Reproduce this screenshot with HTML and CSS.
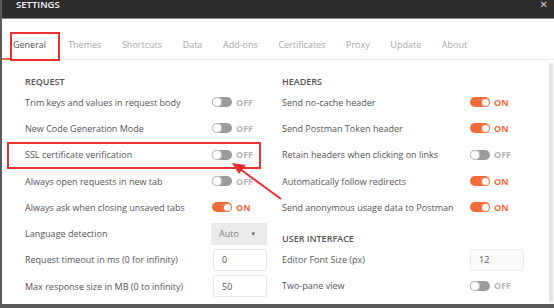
FILE: index.html
```html
<!DOCTYPE html>
<html>
<head>
    <title>Settings</title>
    <link rel="stylesheet" href="styles.css">
</head>
<body>
    <div class="window">
        <div class="titlebar">
            <span class="title">SETTINGS</span>
            <span class="close">&#x2715;</span>
        </div>
        <div class="tabs">
            <span class="tab active">General</span>
            <span class="tab">Themes</span>
            <span class="tab">Shortcuts</span>
            <span class="tab">Data</span>
            <span class="tab">Add-ons</span>
            <span class="tab">Certificates</span>
            <span class="tab">Proxy</span>
            <span class="tab">Update</span>
            <span class="tab">About</span>
        </div>
        <div class="body">
            <div class="columns">
                <div class="col col-left">
                    <div class="section">REQUEST</div>
                    <div class="row"><span class="label">Trim keys and values in request body</span><span class="toggle"><i></i></span><span class="state">OFF</span></div>
                    <div class="row"><span class="label">New Code Generation Mode</span><span class="toggle"><i></i></span><span class="state">OFF</span></div>
                    <div class="row"><span class="label">SSL certificate verification</span><span class="toggle"><i></i></span><span class="state">OFF</span></div>
                    <div class="row"><span class="label">Always open requests in new tab</span><span class="toggle"><i></i></span><span class="state">OFF</span></div>
                    <div class="row"><span class="label">Always ask when closing unsaved tabs</span><span class="toggle on"><i></i></span><span class="state on">ON</span></div>
                    <div class="row"><span class="label">Language detection</span><span class="select">Auto <b>&#9662;</b></span></div>
                    <div class="row"><span class="label">Request timeout in ms (0 for infinity)</span><span class="input">0</span></div>
                    <div class="row"><span class="label">Max response size in MB (0 to infinity)</span><span class="input">50</span></div>
                    <div class="row"><span class="label">Automatically persist variable values</span><span class="toggle"><i></i></span><span class="state">OFF</span></div>
                </div>
                <div class="col col-right">
                    <div class="section">HEADERS</div>
                    <div class="row"><span class="label">Send no-cache header</span><span class="toggle on"><i></i></span><span class="state on">ON</span></div>
                    <div class="row"><span class="label">Send Postman Token header</span><span class="toggle on"><i></i></span><span class="state on">ON</span></div>
                    <div class="row"><span class="label">Retain headers when clicking on links</span><span class="toggle"><i></i></span><span class="state">OFF</span></div>
                    <div class="row"><span class="label">Automatically follow redirects</span><span class="toggle on"><i></i></span><span class="state on">ON</span></div>
                    <div class="row"><span class="label">Send anonymous usage data to Postman</span><span class="toggle on"><i></i></span><span class="state on">ON</span></div>
                    <div class="section second">USER INTERFACE</div>
                    <div class="row"><span class="label">Editor Font Size (px)</span><span class="input soft">12</span></div>
                    <div class="row"><span class="label">Two-pane view</span><span class="toggle"><i></i></span><span class="state">OFF</span></div>
                </div>
            </div>
            <div class="scrollbar"></div>
        </div>
    </div>

    <!-- red annotations drawn over the screenshot -->
    <svg class="marks" width="554" height="308" viewBox="0 0 554 308">
        <rect x="11" y="33" width="48" height="27" fill="none" stroke="#ec2f2f" stroke-width="2"/>
        <rect x="8" y="143" width="252" height="25" fill="none" stroke="#ec2f2f" stroke-width="2"/>
        <line x1="281" y1="199" x2="240" y2="169" stroke="#ec2f2f" stroke-width="2"/>
        <polygon points="232,163 246,165 239,174" fill="#ec2f2f"/>
    </svg>
</body>
</html>
```
FILE: styles.css
```css
body {
    margin: 0;
    font-family: "Open Sans", "DejaVu Sans", sans-serif;
    color: #555;
    background: #fff;
}
.window {
    width: 554px;
    height: 308px;
    box-sizing: border-box;
    border-left: 2px solid #5a5a5a;
    border-bottom: 4px solid #5a5a5a;
    overflow: hidden;
    display: flex;
    flex-direction: column;
}
.titlebar {
    height: 18px;
    flex: none;
    background-color: #2d2d2d;
    color: #f2f2f2;
    display: flex;
    justify-content: space-between;
    align-items: flex-start;
    padding: 0 6px 0 14px;
    border-bottom: 1px solid #8a8a8a;
}
.title {
    font-size: 9.5px;
    font-weight: 600;
    line-height: 9px;
}
.close {
    font-size: 10px;
    line-height: 8px;
    color: #cfcfcf;
}
.tabs {
    height: 41px;
    flex: none;
    box-sizing: border-box;
    padding-top: 10px;
    display: flex;
    align-items: center;
    border-bottom: 1px solid #ececec;
    font-size: 9px;
    color: #a8a8a8;
}
.tab {
    margin-right: 20.6px;
}
.tab.active {
    color: #505050;
    padding-left: 11px;
    margin-right: 22px;
    align-self: stretch;
    display: flex;
    align-items: center;
    background: linear-gradient(#f26b3a, #f26b3a) left bottom / 10px 2px no-repeat;
    margin-bottom: -1px;
}
.body {
    flex: 1;
    display: flex;
    min-height: 0;
}
.columns {
    flex: 1;
    display: grid;
    grid-template-columns: 257px 1fr;
    padding: 15px 0 0 23px;
    font-size: 9px;
}
.section {
    height: 14px;
    line-height: 14px;
    font-weight: 600;
    color: #555;
}
.section.second {
    margin-top: 12px;
}
.row {
    height: 26.3px;
    display: flex;
    align-items: center;
}
.label {
    flex: none;
    width: 187px;
    white-space: nowrap;
}
.col-right .label {
    width: 188px;
}
.toggle {
    width: 20px;
    height: 10px;
    box-sizing: border-box;
    border-radius: 5px;
    background: #9c9c9c;
    display: flex;
    align-items: center;
    padding: 0 1px;
}
.toggle i {
    width: 10px;
    height: 10px;
    margin-left: -1px;
    border-radius: 50%;
    background: #fff;
    box-shadow: 0 0 0 1px #b5b5b5 inset;
}
.toggle.on {
    background: #f26b3a;
    justify-content: flex-end;
}
.toggle.on i {
    margin: 0 -1px 0 0;
    box-shadow: 0 0 0 1px #f26b3a inset;
    width: 9px;
    height: 9px;
}
.state {
    margin-left: 4px;
    font-weight: 700;
    color: #b4b4b4;
}
.state.on {
    color: #f26b3a;
}
.select {
    width: 56px;
    height: 22px;
    box-sizing: border-box;
    margin-left: -1px;
    background: #ebebeb;
    color: #808080;
    display: flex;
    align-items: center;
    justify-content: space-between;
    padding: 0 12px 0 8px;
}
.select b {
    font-size: 7px;
    color: #666;
}
.input {
    width: 54px;
    height: 22px;
    box-sizing: border-box;
    margin-left: 1px;
    border: 1px solid #e8e8e8;
    border-radius: 2px;
    display: flex;
    align-items: center;
    padding-left: 8px;
    color: #555;
}
.input.soft {
    margin-left: 0;
    background: #fafafa;
}
.scrollbar {
    width: 4px;
    margin: 3px 1px 2px 0;
    background: #e6e6e6;
    border-radius: 1px;
}
.marks {
    position: absolute;
    left: 0;
    top: 0;
    pointer-events: none;
}
```
